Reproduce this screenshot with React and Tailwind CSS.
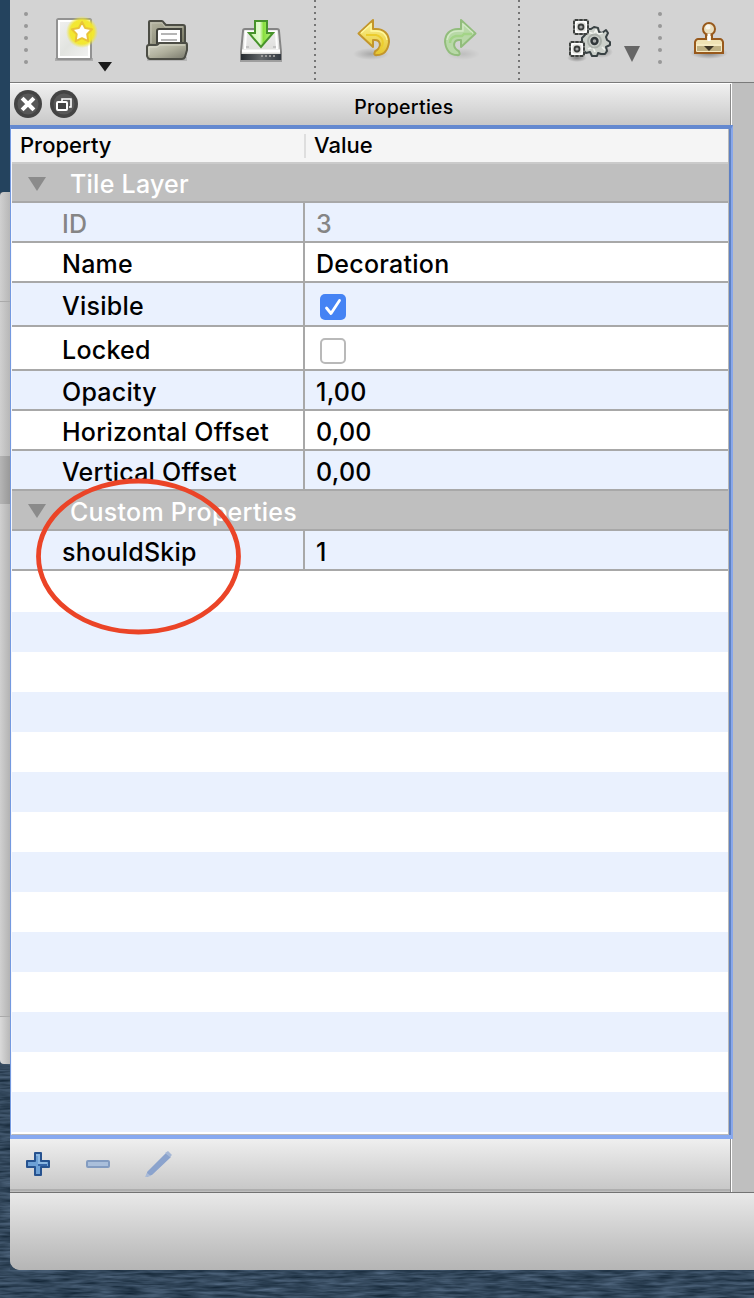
import React from "react";

const properties = [
  { name: "ID", value: "3", height: "h-[40px]", tint: true, muted: true },
  { name: "Name", value: "Decoration", height: "h-[40px]" },
  { name: "Visible", checkbox: true, checked: true, height: "h-[44px]", tint: true },
  { name: "Locked", checkbox: true, checked: false, height: "h-[44px]" },
  { name: "Opacity", value: "1,00", height: "h-[40px]", tint: true },
  { name: "Horizontal Offset", value: "0,00", height: "h-[40px]" },
  { name: "Vertical Offset", value: "0,00", height: "h-[40px]", tint: true },
];

function Grip() {
  return (
    <div className="flex h-full flex-col items-center gap-2 pt-3">
      {[0, 1, 2, 3, 4].map((i) => (
        <span key={i} className="size-1 rounded-full bg-[#989898]" />
      ))}
    </div>
  );
}

function Separator() {
  return (
    <div className="flex h-[82px] flex-col items-center gap-1 overflow-hidden">
      {Array.from({ length: 14 }, (_, i) => (
        <span key={i} className="size-[2px] shrink-0 bg-[#757575]" />
      ))}
    </div>
  );
}

function Shadow({ id, cx, cy, rx, ry, o = 0.25 }) {
  return (
    <>
      <radialGradient id={id}>
        <stop offset="0" stopColor="#000" stopOpacity={o} />
        <stop offset="1" stopColor="#000" stopOpacity="0" />
      </radialGradient>
      <ellipse cx={cx} cy={cy} rx={rx} ry={ry} fill={`url(#${id})`} />
    </>
  );
}

function NewIcon() {
  return (
    <svg width="80" height="82" viewBox="40 0 80 82" className="shrink-0">
      <defs>
        <linearGradient id="page" x1="0" y1="0" x2="1" y2="1">
          <stop offset="0" stopColor="#f2f2f2" />
          <stop offset=".5" stopColor="#e2e4e0" />
          <stop offset="1" stopColor="#f4f4f4" />
        </linearGradient>
        <radialGradient id="glow">
          <stop offset="0" stopColor="#f7ec20" />
          <stop offset=".75" stopColor="#f3e72c" stopOpacity=".95" />
          <stop offset="1" stopColor="#ece640" stopOpacity="0" />
        </radialGradient>
      </defs>
      <path d="M55 58h38v3H55z" fill="#000" opacity=".18" />
      <rect x="57" y="19" width="34" height="40" rx="1.5" fill="url(#page)" stroke="#929292" strokeWidth="2" />
      <rect x="59" y="21" width="30" height="36" fill="none" stroke="#fff" strokeWidth="2" />
      <circle cx="82" cy="32" r="16" fill="url(#glow)" />
      <path d="M82 22l3.2 6 6.8 1.2-4.8 5 1 7-6.2-3-6.3 3 1-7-4.8-5 6.9-1.2z" fill="#fff" stroke="#e9c338" strokeWidth="2" strokeLinejoin="round" />
      <path d="M98 62h14l-7 9.5z" fill="#1b1b1b" />
    </svg>
  );
}

function FolderIcon() {
  return (
    <svg width="94" height="82" viewBox="120 0 94 82" className="shrink-0">
      <defs>
        <linearGradient id="back" x1="0" y1="0" x2="1" y2="1">
          <stop offset="0" stopColor="#b8b8a5" />
          <stop offset="1" stopColor="#74745f" />
        </linearGradient>
        <linearGradient id="front" x1="0" y1="0" x2="1" y2="1">
          <stop offset="0" stopColor="#d5d5c8" />
          <stop offset=".5" stopColor="#b0b09d" />
          <stop offset="1" stopColor="#77776a" />
        </linearGradient>
      </defs>
      <path d="M147 57h40v4h-40z" fill="#000" opacity=".13" />
      <path d="M149 45V22q0-1 1-1h12q1 0 2 2l2 2h17q2 0 2 2v18z" fill="url(#back)" stroke="#4c4d45" strokeWidth="2" />
      <path d="M151 43V23h11l3 4h18" fill="none" stroke="#c1c1b2" strokeWidth="1" />
      <path d="M157 45V31q0-2 2-2h22v16z" fill="#fff" stroke="#42433c" strokeWidth="2" />
      <path d="M161 34h16M161 40h16" stroke="#b5b5b5" strokeWidth="2" />
      <path d="M147 47q0-2 2-2h7q2 0 3-2h27q1 0 1 2v5l-2 7q-1 2-3 2h-32q-2 0-3-3z" fill="url(#front)" stroke="#4c4d45" strokeWidth="2" />
      <path d="M149 55v-8h8l3-2h25" fill="none" stroke="#dadaca" strokeWidth="1" />
    </svg>
  );
}

function SaveIcon() {
  return (
    <svg width="90" height="82" viewBox="214 0 90 82" className="shrink-0">
      <defs>
        <linearGradient id="drive" x1="0" y1="0" x2="0" y2="1">
          <stop offset="0" stopColor="#ededed" />
          <stop offset="1" stopColor="#d9d9d6" />
        </linearGradient>
        <linearGradient id="base">
          <stop offset="0" stopColor="#252a30" />
          <stop offset=".5" stopColor="#626669" />
          <stop offset="1" stopColor="#333941" />
        </linearGradient>
        <linearGradient id="down">
          <stop offset="0" stopColor="#c9f6a7" />
          <stop offset=".45" stopColor="#e4fbd2" />
          <stop offset=".6" stopColor="#88df3d" />
          <stop offset="1" stopColor="#b9f487" />
        </linearGradient>
      </defs>
      <path d="M240 59h42v3h-42z" fill="#000" opacity=".25" />
      <path d="M245 29h32q2 0 2 2l2 21v7h-40v-7l2-21q0-2 2-2z" fill="url(#drive)" stroke="#858585" strokeWidth="2" />
      <path d="M245 49l1-17h30l1 17" fill="none" stroke="#fff" strokeWidth="2" />
      <path d="M242 51h38" stroke="#fff" strokeWidth="3" />
      <rect x="241" y="54" width="40" height="6" fill="url(#base)" />
      <path d="M261 56h15" stroke="#999" strokeWidth="2" strokeDasharray="2 2" />
      <path d="M246 47h3M273 47h3" stroke="#c4c4c4" strokeWidth="2" />
      <path d="M255 21h12v12h6l-12 14-12-14h6z" fill="url(#down)" stroke="#47932b" strokeWidth="2" />
    </svg>
  );
}

function UndoIcon() {
  return (
    <svg width="90" height="82" viewBox="330 0 90 82" className="shrink-0">
      <defs>
        <linearGradient id="gold" x1="0" y1="0" x2="0" y2="1">
          <stop offset="0" stopColor="#fcf6a5" />
          <stop offset=".4" stopColor="#f2e06b" />
          <stop offset="1" stopColor="#e6c52c" />
        </linearGradient>
      </defs>
      <Shadow id="s-undo" cx={371} cy={54} rx={18} ry={6} o={0.2} />
      <path d="M358.500 33.500L373 20v9h3c8 0 13 5 13 13-1 8-5 13-12 13-4 1-3-4 0-5 5-4 3-10-2-10h-2v7z" fill="url(#gold)" stroke="#c3962c" strokeWidth="2" strokeLinejoin="round" />
      <path d="M361 33l10-9v7h5c6 0 10 3 11 9" fill="none" stroke="#fff99f" strokeWidth="1.3" />
      <path d="M366 35h10c7 2 9 8 4 14" fill="none" stroke="#eccd2d" strokeWidth="2" />
    </svg>
  );
}

function RedoIcon() {
  return (
    <svg width="88" height="82" viewBox="420 0 88 82" className="shrink-0">
      <Shadow id="s-redo" cx={463} cy={54} rx={17} ry={6} o={0.1} />
      <path d="M475.500 33.500L461 20v9h-3c-8 0-13 5-13 13 1 8 5 13 12 13 4 1 3-4 0-5-5-4-3-10 2-10h2v7z" fill="#b8d9a7" stroke="#92bd7c" strokeWidth="2" strokeLinejoin="round" />
      <path d="M473 33l-10-9v7h-5c-6 0-10 3-11 9" fill="none" stroke="#d3e9c6" strokeWidth="1.4" />
      <path d="M472 34h-8l-2 2h-6c-4 1-6 4-6 7" fill="none" stroke="#a3d487" strokeWidth="2.4" />
    </svg>
  );
}

function SmallCog({ x, y }) {
  return (
    <g transform={`translate(${x} ${y})`}>
      <rect x="-7" y="-7" width="14" height="14" rx="2" fill="#fff" stroke="#777976" strokeWidth="2" />
      <path d="M-6-7h3M-1.500-7h3M3-7h3M-6 7h3M-1.500 7h3M3 7h3M-7-6v3M-7-1.500v3M-7 3v3M7-6v3M7-1.500v3M7 3v3" stroke="#3e413f" strokeWidth="2" />
      <rect x="-4.500" y="-4.500" width="9" height="9" rx="2" fill="#deded9" />
      <circle r="2.5" fill="#aaa" stroke="#393c3b" strokeWidth="1.8" />
    </g>
  );
}

function GearsIcon() {
  return (
    <svg width="116" height="82" viewBox="534 0 116 82" className="shrink-0">
      <Shadow id="s-g1" cx={577} cy={58} rx={10} ry={4} o={0.4} />
      <Shadow id="s-g2" cx={602} cy={52} rx={11} ry={6} o={0.35} />
      <path d="M591 29l3-2 4 1 1 4 3 1 4-3 2 3-2 4 1 3 3 2v3l-4 2 1 4-2 3h-4l-3-1-1 3h-5l-2-4-4 1-3-3 1-4-2-3v-5l3-3-2-4 3-2z" fill="#cbd0ca" stroke="#394244" strokeWidth="2" strokeLinejoin="round" />
      <path d="M588 32l6 2 2-4 2 4 5-1M588 49l5-2 2 5M602 47l3 3" stroke="#f0f3ee" strokeWidth="1.7" fill="none" />
      <circle cx="594.5" cy="41" r="6.500" fill="none" stroke="#aab0aa" strokeWidth="2" />
      <circle cx="594.5" cy="41" r="3" fill="#a9acaa" stroke="#303739" strokeWidth="2.4" />
      <SmallCog x={581} y={27} />
      <SmallCog x={577} y={49} />
      <path d="M624 46h16l-8 16z" fill="#666" />
    </svg>
  );
}

function StampIcon() {
  return (
    <svg width="84" height="82" viewBox="670 0 84 82" className="shrink-0">
      <Shadow id="s-st" cx={709} cy={53} rx={19} ry={6} o={0.4} />
      <circle cx="709" cy="29" r="6" fill="#eadfbf" stroke="#98591b" strokeWidth="2" />
      <circle cx="708" cy="27" r="2.5" fill="#fff" opacity=".7" />
      <path d="M698 39h8v-4h6v4h8q2 0 3 3v11h-28V42q1-3 3-3z" fill="#f0e3b5" stroke="#98591b" strokeWidth="2" />
      <path d="M709 34v7" stroke="#fff" strokeWidth="3" />
      <rect x="696" y="45" width="26" height="7" fill="#c0b183" stroke="#f6ebc3" strokeWidth="2" />
      <path d="M695 43v8q0 2 2 2h24q2 0 2-2v-8" fill="none" stroke="#98591b" strokeWidth="2" />
      <path d="M704 46h10l-5 5z" fill="#403726" />
    </svg>
  );
}

function DockButton({ children }) {
  return (
    <svg width="28" height="28" viewBox="0 0 28 28" className="shrink-0">
      <circle cx="14" cy="14" r="14" fill="#444" />
      <circle cx="14" cy="14" r="10.500" fill="#585858" />
      {children}
    </svg>
  );
}

function GroupRow({ title, height }) {
  return (
    <div className={`flex items-center border-b-2 border-[#a8a8a8] bg-[#bfbfbf] ${height}`}>
      <svg width="18" height="14" viewBox="0 0 18 14" className="mt-[2px] ml-4">
        <path d="M0 0h18L9 14z" fill="#8b8b8b" />
      </svg>
      <span className="ml-6 pt-[3px] text-[25px] leading-9 font-[450] tracking-[0.25px] text-white">{title}</span>
    </div>
  );
}

function PropertyRow({ item }) {
  const color = item.muted ? "text-[#858585]" : "text-black";
  return (
    <div className={`flex border-b-2 border-[#a8a8a8] ${item.height} ${item.tint ? "bg-[#eaf1fe]" : "bg-white"} ${color}`}>
      <div className="flex w-[293px] shrink-0 items-center border-r-2 border-[#a8a8a8] pl-[50px] pt-1 text-[25px] leading-[34px] font-[450] tracking-[0.25px]">{item.name}</div>
      <div className="flex items-center pl-[11px] pt-1 text-[25px] leading-[34px] font-[450] tracking-[0.25px]">
        {item.checkbox ? (
          <span className={`ml-1 mt-px flex size-[26px] items-center justify-center rounded-[5px] ${item.checked ? "bg-[#4583f4]" : "border-2 border-[#b9b9b9] bg-white"}`}>
            {item.checked && (
              <svg width="26" height="26" viewBox="0 0 26 26">
                <path d="M6.5 14l4.500 5.5L19.500 6.5" fill="none" stroke="#fff" strokeWidth="2.8" strokeLinecap="round" strokeLinejoin="round" />
              </svg>
            )}
          </span>
        ) : (
          item.value
        )}
      </div>
    </div>
  );
}

function WaterTexture() {
  return (
    <svg width="100%" height="100%" className="block">
      <filter id="ripples" x="0" y="0" width="100%" height="100%" colorInterpolationFilters="sRGB">
        <feTurbulence type="fractalNoise" baseFrequency="0.035 0.32" numOctaves="3" seed="8" />
        <feColorMatrix values="0.32 0 0 0 0.04  0.34 0 0 0 0.11  0.38 0 0 0 0.17  0 0 0 0 1" />
      </filter>
      <rect width="100%" height="100%" filter="url(#ripples)" />
    </svg>
  );
}

export default function App() {
  return (
    <div className="relative flex h-[1298px] w-[754px] flex-col overflow-hidden bg-[#34485c] font-[Inter,sans-serif] text-black">
      <div className="flex h-[1270px]">
        <div className="flex w-[10px] shrink-0 flex-col">
          <div className="h-48 bg-[#24435e]" />
          <div className="h-[109px] rounded-tl-sm bg-linear-to-r from-[#d0d0d0] to-[#b7b7b7]" />
          <div className="h-[155px] border-t border-[#aaa] bg-linear-to-r from-[#d0d0d0] to-[#b7b7b7]" />
          <div className="h-12 bg-linear-to-r from-[#b5b5b5] to-[#999]" />
          <div className="h-[512px] bg-linear-to-r from-[#d0d0d0] to-[#b3b3b3]" />
          <div className="h-12 rounded-bl-sm border-t border-[#aaa] bg-linear-to-r from-[#dadada] to-[#b8b8b8]" />
          <div className="min-h-0 flex-1"><WaterTexture /></div>
        </div>

        <div className="flex w-[744px] flex-col overflow-hidden rounded-bl-[10px] bg-[#bfbfbf]">
          <div className="flex h-[83px] shrink-0 border-b border-[#7a7a7a] bg-[#d3d3d3]">
            <div className="w-[30px] shrink-0 pl-[2px]"><Grip /></div>
            <NewIcon />
            <FolderIcon />
            <SaveIcon />
            <div className="w-[26px] shrink-0 pr-1"><Separator /></div>
            <UndoIcon />
            <RedoIcon />
            <div className="w-[26px] shrink-0 pr-1"><Separator /></div>
            <GearsIcon />
            <div className="w-5 shrink-0"><Grip /></div>
            <StampIcon />
          </div>

          <div className="flex h-[42px] shrink-0">
            <div className="flex w-[722px] items-start border-t border-r border-white">
              <div className="flex h-full w-[721px] items-start gap-2 border-r border-[#8a8a8a] bg-linear-to-b from-[#f0f0f0] to-[#c8c8c8] pl-1 pt-[6px]">
                <DockButton>
                  <path d="M9.5 9.5l9 9m0-9l-9 9" stroke="#fff" strokeWidth="4" strokeLinecap="square" />
                </DockButton>
                <DockButton>
                  <path d="M12 11V9h9v8h-2" fill="none" stroke="#fff" strokeWidth="1.6" />
                  <rect x="7" y="12" width="10" height="8" rx="1" fill="#444" stroke="#fff" strokeWidth="2" />
                </DockButton>
                <h1 className="flex-1 pt-[3px] text-center text-[19.5px] leading-7 font-medium tracking-[0.3px]"><span className="mr-2">Properties</span></h1>
              </div>
            </div>
          </div>

          <div className="flex w-[723px] shrink-0 flex-col border-y-4 border-r-2 border-l border-t-[#6489d0] border-r-[#88a7ea] border-b-[#87a9f0] border-l-[#7499df]">
            <div className="border-r-2 border-[#5e80c2]">
              <div className="h-[1006px] border-r border-b border-l border-[#b9b9b9] border-l-[#f4f7ff] bg-white">
                <div className="flex h-[35px] items-center border-b-2 border-[#cbcbcb] bg-[#f5f5f5] text-[22px] leading-8 font-[450]">
                  <div className="flex h-6 w-[294px] items-center border-r-2 border-[#dedede] pb-[2px] pl-2">Property</div>
                  <div className="pb-[2px] pl-2">Value</div>
                </div>
                <GroupRow title="Tile Layer" height="h-[39px]" />
                {properties.map((item) => <PropertyRow key={item.name} item={item} />)}
                <GroupRow title="Custom Properties" height="h-[40px]" />
                <PropertyRow item={{ name: "shouldSkip", value: "1", height: "h-[40px]", tint: true }} />
                <div className="h-[41px]" />
                <div>
                  {Array.from({ length: 13 }, (_, i) => (
                    <div key={i} className="h-10 odd:bg-[#eaf1fe] even:bg-white" />
                  ))}
                </div>
              </div>
            </div>
          </div>

          <div className="flex h-[53px] w-[722px] shrink-0 border-r border-white">
            <div className="flex w-[721px] border-r border-[#8a8a8a]">
              <div className="flex h-[52px] w-full items-start border-b-2 border-[#aeaeae] bg-linear-to-b from-[#efefef] to-[#c8c8c8] pl-4 pt-[13px]">
                <svg width="24" height="24" viewBox="0 0 24 24">
                  <path d="M9 1h6v8h8v6h-8v8H9v-8H1V9h8z" fill="#6da0d5" stroke="#26528f" strokeWidth="2" strokeLinejoin="round" />
                  <path d="M10 3h3v8h8" fill="none" stroke="#8bb7e1" strokeWidth="2" />
                  <path d="M12 13h9" stroke="#3464a7" strokeWidth="2" />
                </svg>
                <svg width="24" height="24" viewBox="0 0 24 24" className="ml-9">
                  <rect x="1" y="9" width="22" height="6" rx="1" fill="#aabfdb" stroke="#839cc1" strokeWidth="2" />
                </svg>
                <svg width="30" height="28" viewBox="0 0 30 28" className="-mt-[2px] ml-[34px]">
                  <path d="M4 22L22 4l4 3L8 24l-5 2z" fill="#8ba3cd" stroke="#8ba3cd" strokeWidth="1.500" strokeLinejoin="round" />
                  <path d="M21 3l3-2 4 4-2 2z" fill="#a6b8d6" />
                  <path d="M1 27l2-4 4 3z" fill="#a9bbd8" />
                </svg>
              </div>
            </div>
          </div>
          <div className="min-h-0 flex-1 border-t border-[#737373] bg-linear-to-b from-[#e9e9e9] to-[#b5b5b5]" />
        </div>
      </div>
      <div className="h-7"><WaterTexture /></div>

      <svg width="210" height="160" viewBox="0 0 210 160" className="pointer-events-none absolute top-[476px] left-[34px]">
        <ellipse cx="104.5" cy="80.500" rx="100" ry="75.5" fill="none" stroke="#eb4427" strokeWidth="4.8" />
      </svg>
    </div>
  );
}
